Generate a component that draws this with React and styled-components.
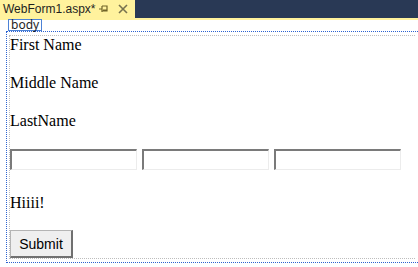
import React from "react";
import styled, { createGlobalStyle } from "styled-components";

const GlobalStyle = createGlobalStyle`
  html, body {
    margin: 0;
    padding: 0;
    background: #fff;
    overflow: hidden;
  }
`;

const Window = styled.div`
  width: 418px;
  height: 267px;
  background: #fff;
  overflow: hidden;
`;

const TabStrip = styled.div`
  display: flex;
  height: 18px;
  background: #293955;
`;

const Tab = styled.div`
  display: flex;
  align-items: center;
  width: 135px;
  padding-left: 3px;
  box-sizing: border-box;
  background: #fff29d;
  font-family: "Liberation Sans", Arial, sans-serif;
  font-size: 12px;
  color: #1e1e1e;
  white-space: nowrap;
`;

const TabTitle = styled.span`
  flex: 1;
  line-height: 18px;
`;

const TabIcon = styled.svg`
  display: block;
  margin-right: ${(p) => p.gap || 0}px;
`;

const TabUnderline = styled.div`
  height: 2px;
  background: #fff29d;
`;

const Surface = styled.div`
  position: relative;
  padding: 11px 0 0 6px;
`;

const TagLabel = styled.div`
  position: absolute;
  left: 8px;
  top: -1px;
  height: 10px;
  padding: 0 2px;
  border: 1px solid #4d82d6;
  background: #fff;
  font-family: "Noto Sans", "Open Sans", sans-serif;
  font-size: 12px;
  line-height: 10px;
  color: #1e1e1e;
`;

const BodyBox = styled.div`
  border-top: 1px dotted #2d62d0;
  border-left: 1px dotted #2d62d0;
  border-bottom: 1px dotted #2d62d0;
  padding: 3px 0 3px 2px;
`;

const FormBox = styled.div`
  border-top: 1px dotted #bdbdbd;
  border-left: 1px dotted #bdbdbd;
  border-bottom: 1px dotted #bdbdbd;
  margin-right: 3px;
  padding: 0;
  font-family: "Liberation Serif", "Times New Roman", serif;
  font-size: 16px;
  color: #000;
`;

const Para = styled.div`
  line-height: 18px;
  margin-bottom: ${(p) => p.after}px;
`;

const InputRow = styled.div`
  display: flex;
  gap: 5px;
  margin-bottom: 24px;
`;

const TextBox = styled.div`
  width: 127px;
  height: 21px;
  box-sizing: border-box;
  border-top: 2px solid #7a7a7a;
  border-left: 2px solid #7a7a7a;
  border-right: 1px solid #ececec;
  border-bottom: 1px solid #ececec;
  background: #fff;
`;

const SubmitButton = styled.div`
  width: 63px;
  height: 28px;
  box-sizing: border-box;
  display: flex;
  align-items: center;
  justify-content: center;
  border: 1px solid #b4b4b4;
  border-right: 2px solid #707070;
  border-bottom: 2px solid #707070;
  background: #efefef;
  font-family: "Liberation Sans", Arial, sans-serif;
  font-size: 14px;
  color: #000;
`;

const PinIcon = () => (
  <TabIcon width="10" height="10" viewBox="0 0 10 10" gap={9}>
    <path d="M0 5h3M3 2v6M3 2h5v5H3M4 6h4" stroke="#6f6328" strokeWidth="1.2" fill="none" />
  </TabIcon>
);

const CloseIcon = () => (
  <TabIcon width="10" height="10" viewBox="0 0 10 10" gap={7}>
    <path d="M1 1l8 8M9 1l-8 8" stroke="#77724f" strokeWidth="1.6" />
  </TabIcon>
);

export default function App() {
  return (
    <Window>
      <GlobalStyle />
      <TabStrip>
        <Tab>
          <TabTitle>WebForm1.aspx*</TabTitle>
          <PinIcon />
          <CloseIcon />
        </Tab>
      </TabStrip>
      <TabUnderline />
      <Surface>
        <TagLabel>body</TagLabel>
        <BodyBox>
          <FormBox>
            <Para after={20}>First Name</Para>
            <Para after={20}>Middle Name</Para>
            <Para after={19}>LastName</Para>
            <InputRow>
              <TextBox />
              <TextBox />
              <TextBox />
            </InputRow>
            <Para after={18}>Hiiii!</Para>
            <SubmitButton>Submit</SubmitButton>
          </FormBox>
        </BodyBox>
      </Surface>
    </Window>
  );
}
